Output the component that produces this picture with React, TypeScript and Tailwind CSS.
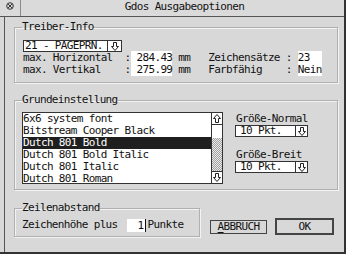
import React from 'react';

const font = "font-['DejaVu_Sans_Mono',monospace] text-[11px] tracking-[-0.65px] text-[#111]";
const frame = 'border border-[#b0b0b0] shadow-[1px_1px_0_#f3f3f3,inset_1px_1px_0_#f3f3f3]';

const ArrowDown = () => (
  <svg width="8" height="9" viewBox="0 0 8 9">
    <path d="M2.5 0.5h3v4h2L4 8.5 0.5 4.5h2z" fill="none" stroke="#222" strokeWidth="1" />
  </svg>
);

const ArrowUp = () => (
  <svg width="8" height="9" viewBox="0 0 8 9">
    <path d="M2.5 8.5h3v-4h2L4 0.5 0.5 4.5h2z" fill="none" stroke="#222" strokeWidth="1" />
  </svg>
);

const CloseGlyph = () => (
  <svg width="8" height="8" viewBox="0 0 8 8">
    <circle cx="4" cy="4" r="3.3" fill="none" stroke="#333" strokeWidth="1" />
    <path d="M2 2l4 4M6 2l-4 4" stroke="#333" strokeWidth="1" />
  </svg>
);

const SizeBox = ({ value }: { value: string }) => (
  <div className="flex h-[12px] w-[73px] border border-[#333] bg-white">
    <span className="flex-1 pl-[4px] leading-[10px]">{value}</span>
    <span className="flex w-[12px] items-center justify-center border-l border-[#333]">
      <ArrowDown />
    </span>
  </div>
);

const fonts = [
  '6x6 system font',
  'Bitstream Cooper Black',
  'Dutch 801 Bold',
  'Dutch 801 Bold Italic',
  'Dutch 801 Italic',
  'Dutch 801 Roman',
];

export default function App() {
  return (
    <div className={`h-[261px] w-[350px] overflow-hidden bg-white ${font}`}>
      <div className="flex h-[254px] w-[346px] flex-col border-r-2 border-b-2 border-[#333] bg-[#d8d8d8]">
        {/* Title bar */}
        <div className="flex h-[17px] border-b border-[#555] bg-[#dadada]">
          <div className="flex w-[21px] justify-center border-r border-[#8a8a8a] pt-[2px]">
            <CloseGlyph />
          </div>
          <div className="flex-1 pl-[4px] text-center leading-[13px]">Gdos Ausgabeoptionen</div>
        </div>

        {/* Body */}
        <div className="ml-[4px] flex flex-1 flex-col border-l border-[#555]">
          <fieldset className={`ml-[9px] mt-[4px] w-[324px] pt-[7px] pb-[6px] pl-[8px] ${frame}`}>
            <legend className="-ml-[1px] leading-[12px]">Treiber-Info</legend>
            <div className="flex h-[12px] w-[99px] border border-[#333] bg-white">
              <span className="flex-1 pl-[1px] leading-[10px]">21 - PAGEPRN.</span>
              <span className="flex w-[14px] items-center justify-center border-l border-[#333]">
                <ArrowDown />
              </span>
            </div>
            <div className="h-[12px] whitespace-pre leading-[12px]">
              max. Horizontal  :<span className="bg-white"> 284.43</span> mm   Zeichensätze :{' '}
              <span className="bg-white">23  </span>
            </div>
            <div className="h-[12px] whitespace-pre leading-[12px]">
              max. Vertikal    :<span className="bg-white"> 275.99</span> mm   Farbfähig    :{' '}
              <span className="bg-white">Nein</span>
            </div>
          </fieldset>

          <fieldset className={`ml-[9px] mt-[11px] w-[324px] pt-[6px] pb-[5px] pl-[7px] ${frame}`}>
            <legend className="leading-[12px]">Grundeinstellung</legend>
            <div className="flex">
              <div className="flex h-[72px] w-[201px] border border-[#333] bg-white">
                <div className="flex flex-1 flex-col">
                  {fonts.map((f, i) => (
                    <div
                      key={f}
                      className={`h-[12px] leading-[12px] ${i === 2 ? 'bg-[#1f1f1f] text-white' : ''}`}
                    >
                      {f}
                    </div>
                  ))}
                </div>
                <div className="flex w-[11px] flex-col border-l border-[#333]">
                  <div className="flex h-[12px] items-center justify-center border-b border-[#333]">
                    <ArrowUp />
                  </div>
                  <div className="h-[13px] bg-white" />
                  <div className="flex-1 bg-[repeating-conic-gradient(#a0a0a0_0_25%,#ececec_0_50%)] bg-size-[2px_2px]" />
                  <div className="flex h-[12px] items-center justify-center border-t border-[#333]">
                    <ArrowDown />
                  </div>
                </div>
              </div>

              <div className="ml-[12px] mt-[1px] flex flex-col">
                <div className="pl-[1px] leading-[12px]">Größe-Normal</div>
                <SizeBox value="10 Pkt." />
                <div className="mt-[12px] pl-[1px] leading-[12px]">Größe-Breit</div>
                <SizeBox value="10 Pkt." />
              </div>
            </div>
          </fieldset>

          <div className="mt-[12px] flex items-start">
            <fieldset className={`ml-[9px] w-[186px] pt-[5px] pb-[4px] pl-[7px] ${frame}`}>
              <legend className="leading-[12px]">Zeilenabstand</legend>
              <div className="flex h-[13px] items-center">
                <span>Zeichenhöhe plus</span>
                <span className="ml-[9px] h-[13px] w-[18px] bg-white pr-[1px] text-right leading-[13px]">1</span>
                <span className="h-[13px] w-[1px] bg-[#111]" />
                <span className="ml-[2px]">Punkte</span>
              </div>
            </fieldset>

            <div className="ml-[10px] mt-[16px] flex items-center gap-[8px]">
              <button className="flex h-[14px] w-[57px] items-center justify-center border border-[#444] leading-[12px]">
                <span className="underline underline-offset-2">A</span>BBRUCH
              </button>
              <button className="flex h-[17px] w-[59px] items-center justify-center border-2 border-[#444] leading-[12px]">
                OK
              </button>
            </div>
          </div>
        </div>
      </div>
    </div>
  );
}
